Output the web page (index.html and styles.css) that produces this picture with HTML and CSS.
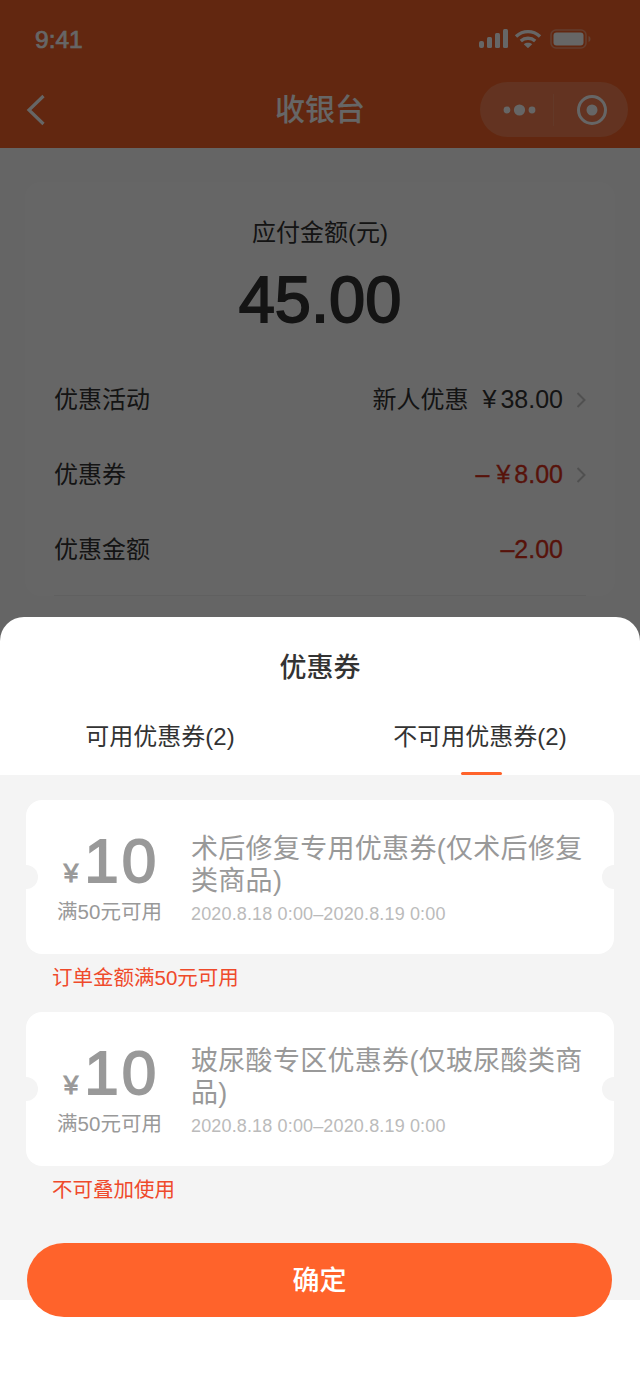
FILE: index.html
```html
<!DOCTYPE html>
<html lang="zh-CN">
<head>
    <meta charset="UTF-8">
    <meta name="viewport" content="width=device-width, initial-scale=1.0">
    <title>收银台</title>
    <link rel="stylesheet" href="styles.css">
</head>
<body>
    <div class="page">
        <header class="topbar">
            <div class="status">
                <span class="time">9:41</span>
                <div class="status-icons">
                    <svg class="signal" width="30" height="19" viewBox="0 0 30 19"><rect x="0" y="12" width="5" height="7" rx="2" fill="#fff"/><rect x="8" y="8" width="5" height="11" rx="1.5" fill="#fff"/><rect x="16" y="4" width="5" height="15" rx="1.5" fill="#fff"/><rect x="24" y="0" width="5" height="19" rx="1.5" fill="#fff"/></svg>
                    <svg width="28" height="19" viewBox="0 0 28 19"><path d="M2 7.5C9 1 19 1 26 7.5" fill="none" stroke="#fff" stroke-width="3.4"/><path d="M6.8 12C11 8.3 17 8.3 21.2 12" fill="none" stroke="#fff" stroke-width="3.4"/><path d="M9.8 15.2C12.3 13.3 15.7 13.3 18.2 15.2L14 19.2Z" fill="#fff"/></svg>
                    <svg width="41" height="20" viewBox="0 0 41 20"><rect x="1" y="1" width="35" height="18" rx="5" fill="none" stroke="#fff" stroke-opacity=".35" stroke-width="1.6"/><rect x="3.5" y="3.5" width="30" height="13" rx="3" fill="#fff"/><path d="M38.5 7C40 7.6 40.5 8.6 40.5 10S40 12.4 38.5 13Z" fill="#fff" fill-opacity=".4"/></svg>
                </div>
            </div>
            <div class="nav">
                <svg class="back" width="20" height="32" viewBox="0 0 20 32"><path d="M17.5 2L3 16l14.5 14" fill="none" stroke="#fff" stroke-width="3.2"/></svg>
                <h1>收银台</h1>
                <div class="capsule">
                    <svg width="73" height="32" viewBox="0 0 73 32"><circle cx="26" cy="16" r="3.4" fill="#fff"/><circle cx="38.5" cy="16" r="5.6" fill="#fff"/><circle cx="51" cy="16" r="3.4" fill="#fff"/><path d="M73 0v32" stroke="#fff" stroke-opacity=".15" stroke-width="1.5"/></svg>
                    <svg class="target" width="32" height="32" viewBox="0 0 32 32"><circle cx="16" cy="16" r="13.5" fill="none" stroke="#fff" stroke-width="3"/><circle cx="16" cy="16" r="5.5" fill="#fff"/></svg>
                </div>
            </div>
        </header>

        <main class="card">
            <div class="due-label">应付金额(元)</div>
            <div class="due-amount">45.00</div>
            <div class="row">
                <span>优惠活动</span>
                <span class="row-value">新人优惠<span class="num first">¥</span><span class="num">38.00</span></span>
                <svg class="chevron" width="10" height="16" viewBox="0 0 10 16"><path d="M1.5 1l7 7-7 7" fill="none" stroke="#c8c8c8" stroke-width="2"/></svg>
            </div>
            <div class="row">
                <span>优惠券</span>
                <span class="row-value red"><span class="num">–</span><span class="num first">¥</span><span class="num">8.00</span></span>
                <svg class="chevron" width="10" height="16" viewBox="0 0 10 16"><path d="M1.5 1l7 7-7 7" fill="none" stroke="#c8c8c8" stroke-width="2"/></svg>
            </div>
            <div class="row">
                <span>优惠金额</span>
                <span class="row-value red"><span class="num">–2.00</span></span>
                <span class="chevron"></span>
            </div>
            <div class="divider"></div>
        </main>
    </div>

    <div class="overlay"></div>

    <section class="sheet">
        <h2>优惠券</h2>
        <div class="tabs">
            <div class="tab">可用优惠券(2)</div>
            <div class="tab active">不可用优惠券(2)</div>
        </div>
        <div class="list">
            <div class="coupon">
                <div class="coupon-left">
                    <div class="price"><span class="yen">¥</span><span class="big">10</span></div>
                    <div class="limit">满50元可用</div>
                </div>
                <div class="coupon-right">
                    <div class="coupon-name">术后修复专用优惠券(仅术后修复类商品)</div>
                    <div class="coupon-date">2020.8.18 0:00–2020.8.19 0:00</div>
                </div>
            </div>
            <div class="reason">订单金额满50元可用</div>
            <div class="coupon">
                <div class="coupon-left">
                    <div class="price"><span class="yen">¥</span><span class="big">10</span></div>
                    <div class="limit">满50元可用</div>
                </div>
                <div class="coupon-right">
                    <div class="coupon-name">玻尿酸专区优惠券(仅玻尿酸类商品)</div>
                    <div class="coupon-date">2020.8.18 0:00–2020.8.19 0:00</div>
                </div>
            </div>
            <div class="reason">不可叠加使用</div>
        </div>
        <div class="sheet-foot">
            <button type="button" class="confirm">确定</button>
        </div>
    </section>
</body>
</html>
```

FILE: styles.css
```css
* {
    box-sizing: border-box;
}
html, body {
    margin: 0;
    padding: 0;
}
body {
    position: relative;
    width: 640px;
    height: 1386px;
    overflow: hidden;
    font-family: "Liberation Sans", "Noto Sans CJK SC", sans-serif;
    color: #333;
    background-color: #fdfdfd;
}
.topbar {
    height: 148px;
    background-color: #f56228;
    color: #fff;
}
.status {
    display: flex;
    justify-content: space-between;
    align-items: center;
    height: 58px;
    padding: 21px 49px 0 35px;
}
.time {
    font-size: 24.5px;
    -webkit-text-stroke: 0.7px #fff;
}
.status-icons {
    display: flex;
    align-items: center;
    gap: 8px;
    margin-top: -2px;
}
.signal {
    margin-right: -3px;
}
.nav {
    position: relative;
    display: flex;
    justify-content: space-between;
    align-items: center;
    height: 56px;
    margin-top: 24px;
    padding: 0 12px 0 26px;
}
.nav h1 {
    position: absolute;
    left: 0;
    right: 0;
    margin: 0;
    font-size: 30px;
    font-weight: 500;
    line-height: 56px;
    text-align: center;
}
.capsule {
    display: flex;
    align-self: flex-start;
    align-items: center;
    width: 148px;
    height: 55px;
    padding-left: 1px;
    border-radius: 28px;
    background-color: rgba(255, 255, 255, 0.2);
}
.capsule .target {
    margin-left: 22px;
}
.card {
    margin: 34px 25px 0;
    padding: 34px 29px 0;
    border-radius: 16px;
    background-color: #fff;
}
.due-label {
    font-size: 24px;
    line-height: 34px;
    text-align: center;
}
.due-amount {
    margin-top: 13px;
    font-size: 65px;
    line-height: 74px;
    text-align: center;
    -webkit-text-stroke: 1.8px #333;
}
.row {
    display: flex;
    align-items: center;
    height: 75px;
    font-size: 24px;
}
.due-amount + .row {
    margin-top: 23px;
}
.row-value {
    margin-left: auto;
    display: flex;
    align-items: center;
}
.num {
    position: relative;
    top: 2px;
    font-size: 25px;
}
.first {
    margin: 0 4px 0 14px;
}
.red {
    color: #d9301a;
    -webkit-text-stroke: 0.3px #d9301a;
}
.red .first {
    margin: 0 4px 0 7px;
}
.chevron {
    flex: none;
    width: 10px;
    margin: 4px 0 0 13px;
}
.divider {
    height: 1px;
    margin-top: 10px;
    background-color: #f0f0f0;
}
.overlay {
    position: absolute;
    inset: 0;
    background-color: rgba(0, 0, 0, 0.6);
}
.sheet {
    position: absolute;
    left: 0;
    right: 0;
    bottom: 0;
    height: 769px;
    border-radius: 24px 24px 0 0;
    background-color: #fff;
}
.sheet h2 {
    margin: 0;
    padding-top: 33px;
    font-size: 27px;
    font-weight: 500;
    line-height: 36px;
    text-align: center;
}
.tabs {
    display: flex;
    margin-top: 14px;
    height: 75px;
}
.tab {
    position: relative;
    flex: 1;
    padding-top: 21px;
    font-size: 24px;
    line-height: 32px;
    text-align: center;
}
.tab.active::after {
    content: "";
    position: absolute;
    left: 141px;
    bottom: 0;
    width: 41px;
    height: 3px;
    border-radius: 2px;
    background-color: #ff632b;
}
.list {
    height: 525px;
    padding: 25px 26px 0;
    background-color: #f4f4f4;
}
.coupon {
    position: relative;
    display: flex;
    height: 154px;
    border-radius: 16px;
    background-color: #fff;
}
.coupon::before,
.coupon::after {
    content: "";
    position: absolute;
    top: 65px;
    width: 24px;
    height: 24px;
    border-radius: 50%;
    background-color: #f4f4f4;
}
.coupon::before {
    left: -12px;
}
.coupon::after {
    right: -12px;
}
.coupon-left {
    flex: none;
    width: 165px;
    padding-top: 26px;
    text-align: center;
    color: #999;
}
.price {
    display: flex;
    justify-content: center;
    align-items: baseline;
    height: 72px;
    padding-left: 6px;
    line-height: 70px;
}
.yen {
    margin-right: 6px;
    font-size: 26px;
    -webkit-text-stroke: 1px #999;
}
.big {
    font-size: 62px;
    letter-spacing: 3px;
    -webkit-text-stroke: 1.8px #999;
}
.limit {
    padding-left: 2px;
    font-size: 20.5px;
    line-height: 28px;
}
.coupon-right {
    flex: 1;
    padding: 33px 24px 0 0;
}
.coupon-name {
    font-size: 27px;
    letter-spacing: 0.3px;
    line-height: 32px;
    color: #999;
}
.coupon-date {
    margin-top: 5px;
    font-size: 18px;
    letter-spacing: 0.15px;
    line-height: 24px;
    color: #bbb;
}
.reason {
    height: 58px;
    padding: 10px 0 0 26px;
    font-size: 20.5px;
    line-height: 28px;
    color: #ef4a2b;
}
.sheet-foot {
    height: 86px;
    padding: 0 28px 0 27px;
}
.confirm {
    display: block;
    width: 100%;
    height: 74px;
    margin-top: -57px;
    padding: 0 0 3px;
    position: relative;
    border: 0;
    border-radius: 37px;
    font-family: inherit;
    font-size: 27px;
    font-weight: 500;
    color: #fff;
    background-color: #ff632b;
}
```
